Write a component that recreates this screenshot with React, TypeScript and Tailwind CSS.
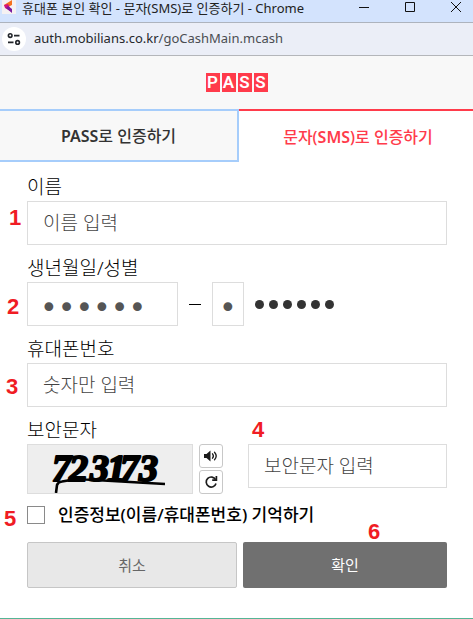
import { useState, type ReactNode } from 'react';

const FONT_UI = "font-['Noto_Sans','Noto_Sans_CJK_KR',sans-serif]";
const INPUT_CLASS =
  'block h-11 w-full min-w-0 border border-[#dddddd] bg-white px-[15px] text-[19px] font-light text-[#444444] outline-none placeholder:text-[#444444]';

function StepMark({ value, className }: { value: number; className: string }) {
  return (
    <span
      aria-hidden="true"
      className={`absolute font-['Liberation_Sans',sans-serif] text-[22px] leading-6 font-bold text-[#f01c24] ${className}`}
    >
      {value}
    </span>
  );
}

function Field({ label, htmlFor, children }: { label: string; htmlFor: string; children: ReactNode }) {
  return (
    <div className="relative">
      <label htmlFor={htmlFor} className="mb-0.5 block text-[19px] leading-6 font-light text-black">
        {label}
      </label>
      {children}
    </div>
  );
}

function Favicon() {
  return (
    <svg width="14" height="14" viewBox="0 0 14 14" className="shrink-0">
      <rect width="14" height="14" fill="#f5f1f2" />
      <path d="M10 0 2 5l2 3 6-3z" fill="#f5711f" />
      <path d="M2 5 6 4l4 8-7-4z" fill="#d6117c" />
      <path d="m4 8 2-2 4 3v4z" fill="#7b1c9e" />
    </svg>
  );
}

function TuneIcon() {
  return (
    <svg width="14" height="14" viewBox="0 0 14 14" fill="none" stroke="#23262b" strokeWidth="1.6">
      <circle cx="3.2" cy="3.6" r="1.8" />
      <path d="M7 3.6h5.5M1 10.4h5.5" />
      <circle cx="10.6" cy="10.4" r="1.8" />
    </svg>
  );
}

function SpeakerIcon() {
  return (
    <svg width="16" height="14" viewBox="0 0 16 14" fill="none" stroke="#1c1c1c" strokeWidth="1.3">
      <path d="M1 5h2.5l4-3.5v11L3.500 9H1z" fill="#1c1c1c" stroke="none" />
      <path d="M9.500 4.800q1.800 2.200 0 4.400M11.500 3.200q3.400 3.800 0 7.600" strokeLinecap="round" />
    </svg>
  );
}

function RefreshIcon() {
  return (
    <svg width="14" height="14" viewBox="0 0 14 14" fill="none" stroke="#1c1c1c" strokeWidth="1.7">
      <path d="M11.600 4.600A5 5 0 1 0 12 8.500" />
      <path d="M12.400 1v4.200H8.200" />
    </svg>
  );
}

function Captcha() {
  return (
    <svg viewBox="0 0 164 48" className="h-full w-full" role="img" aria-label="보안문자">
      <g
        fill="#000"
        stroke="#000"
        strokeWidth="2.2"
        strokeLinejoin="round"
        fontFamily="'Liberation Serif', serif"
        fontWeight="bold"
        fontStyle="italic"
        fontSize="38"
      >
        <text x="24 41 62 79 92 111" y="36">723173</text>
      </g>
      <path d="M28 48l1-8q1-3 5-3.500l12-2q6-.5 12 0l79 4.500" fill="none" stroke="#000" strokeWidth="2.600" />
    </svg>
  );
}

export default function App() {
  const [name, setName] = useState('');
  const [birth, setBirth] = useState('000000');
  const [gender, setGender] = useState('0');
  const [phone, setPhone] = useState('');
  const [code, setCode] = useState('');
  const [remember, setRemember] = useState(false);

  return (
    <div className={`border-b border-[#55b595] bg-white ${FONT_UI}`}>
      <div className="flex h-[23px] items-start border-b border-[#adb3bd] bg-[#d3e3fd] pl-0.5">
        <Favicon />
        <h1 className="ml-1.5 flex-1 text-[13px] leading-4 whitespace-nowrap text-[#222222]">
          휴대폰 본인 확인 - 문자(SMS)로 인증하기 - Chrome
        </h1>
        <div className="flex gap-9 pt-0.5 pr-3">
          <button type="button" aria-label="최소화">
            <svg width="10" height="10" viewBox="0 0 10 10" stroke="#111" className="block">
              <path d="M0 5.500h10" />
            </svg>
          </button>
          <button type="button" aria-label="최대화">
            <svg width="10" height="10" viewBox="0 0 10 10" fill="none" stroke="#111" className="block">
              <path d="M.5.5h9v9h-9z" />
            </svg>
          </button>
          <button type="button" aria-label="닫기">
            <svg width="10" height="10" viewBox="0 0 10 10" stroke="#111" className="block">
              <path d="m0 0 10 10M10 0 0 10" />
            </svg>
          </button>
        </div>
      </div>

      <div className="flex h-[33px] items-center gap-2 border-b border-[#b4b6ba] bg-[#ebeef7] pl-0.5">
        <button type="button" aria-label="사이트 정보" className="flex size-6 items-center justify-center rounded-full bg-white">
          <TuneIcon />
        </button>
        <span className="text-[13px] text-[#4a4d52]">
          <span className="text-[#26282c]">auth.mobilians.co.kr</span>/goCashMain.mcash
        </span>
      </div>

      <header className="flex h-[53px] items-center justify-center gap-0.5 bg-[#f8f8f8]">
        {['P', 'A', 'S', 'S'].map((letter, i) => (
          <span
            key={i}
            className="flex h-[19px] w-[14px] items-center justify-center bg-[#ff3b4b] font-['Roboto','Liberation_Sans',sans-serif] text-[17px] leading-[19px] font-semibold text-white"
          >
            {letter}
          </span>
        ))}
      </header>

      <nav className="flex h-[53px] text-[16px] font-medium">
        <button type="button" className="w-[239px] shrink-0 border-2 border-l-0 border-[#a6cdfb] bg-[#f8f8f8] text-[#333333]">
          <span className="font-semibold">PASS</span>로 인증하기
        </button>
        <button type="button" className="flex-1 border-t-2 border-[#ff3b4b] pl-1 text-[#ff3b4b]">
          문자(<span className="font-semibold">SMS</span>)로 인증하기
        </button>
      </nav>

      <form className="pt-[13px] pr-[26px] pb-[30px] pl-[27px]" onSubmit={(e) => e.preventDefault()}>
        <div className="flex flex-col gap-[11px]">
          <Field label="이름" htmlFor="name">
            <input id="name" className={INPUT_CLASS} placeholder="이름 입력" value={name} onChange={(e) => setName(e.target.value)} />
            <StepMark value={1} className="top-[31px] -left-[18px]" />
          </Field>

          <Field label="생년월일/성별" htmlFor="birth">
            <div className="flex items-center">
              <div className="w-[151px]">
                <input
                  id="birth"
                  type="password"
                  maxLength={6}
                  className="block h-11 w-full border border-[#dddddd] bg-white px-3 pt-1.5 font-['DejaVu_Sans',sans-serif] text-[30px] text-[#555555] outline-none"
                  value={birth}
                  onChange={(e) => setBirth(e.target.value)}
                />
              </div>
              <span className="mx-[11px] h-px w-3 bg-black" />
              <input
                type="password"
                aria-label="성별"
                maxLength={1}
                className="block h-11 w-8 border border-[#dddddd] bg-white px-1.5 pt-1.5 font-['DejaVu_Sans',sans-serif] text-[30px] text-[#555555] outline-none"
                value={gender}
                onChange={(e) => setGender(e.target.value)}
              />
              <div className="ml-[11px] flex gap-[5px]" aria-hidden="true">
                {[0, 1, 2, 3, 4, 5].map((i) => (
                  <span key={i} className="size-[9px] rounded-full bg-[#333333]" />
                ))}
              </div>
            </div>
            <StepMark value={2} className="top-[39px] -left-[20px]" />
          </Field>

          <Field label="휴대폰번호" htmlFor="phone">
            <input id="phone" className={INPUT_CLASS} placeholder="숫자만 입력" value={phone} onChange={(e) => setPhone(e.target.value)} />
            <StepMark value={3} className="top-[38px] -left-[21px]" />
          </Field>

          <Field label="보안문자" htmlFor="code">
            <div className="flex items-start">
              <div className="h-[50px] w-[166px] border border-[#dddddd] bg-[#eeeeee]">
                <Captcha />
              </div>
              <div className="ml-1.5 flex flex-col gap-0.5">
                <button type="button" aria-label="음성 듣기" className="flex size-6 items-center justify-center rounded-[3px] border border-[#c8c8c8]">
                  <SpeakerIcon />
                </button>
                <button type="button" aria-label="새로고침" className="flex size-6 items-center justify-center rounded-[3px] border border-[#c8c8c8]">
                  <RefreshIcon />
                </button>
              </div>
              <div className="relative ml-[25px] min-w-0 flex-1">
                <input id="code" className={INPUT_CLASS} placeholder="보안문자 입력" value={code} onChange={(e) => setCode(e.target.value)} />
                <StepMark value={4} className="-top-[26px] left-1" />
              </div>
            </div>
          </Field>
        </div>

        <div className="relative mt-[9px] flex h-6 items-center">
          <input
            id="remember"
            type="checkbox"
            className="size-[18px] appearance-none border border-[#8a8a8a] bg-white checked:bg-[#555555]"
            checked={remember}
            onChange={(e) => setRemember(e.target.checked)}
          />
          <label htmlFor="remember" className="ml-[13px] text-[17px] font-medium text-black">
            인증정보(이름/휴대폰번호) 기억하기
          </label>
          <StepMark value={5} className="top-1 -left-[23px]" />
        </div>

        <div className="mt-[15px] flex gap-1.5">
          <button type="button" className="h-[46px] w-[210px] rounded-xs border border-[#c6c6c6] bg-[#e8e8e8] text-[15px] text-[#666666]">
            취소
          </button>
          <div className="relative flex-1">
            <button type="submit" className="h-[46px] w-full rounded-xs bg-[#707070] text-[15px] text-white">
              확인
            </button>
            <StepMark value={6} className="-top-[22px] left-[125px]" />
          </div>
        </div>
      </form>
    </div>
  );
}
